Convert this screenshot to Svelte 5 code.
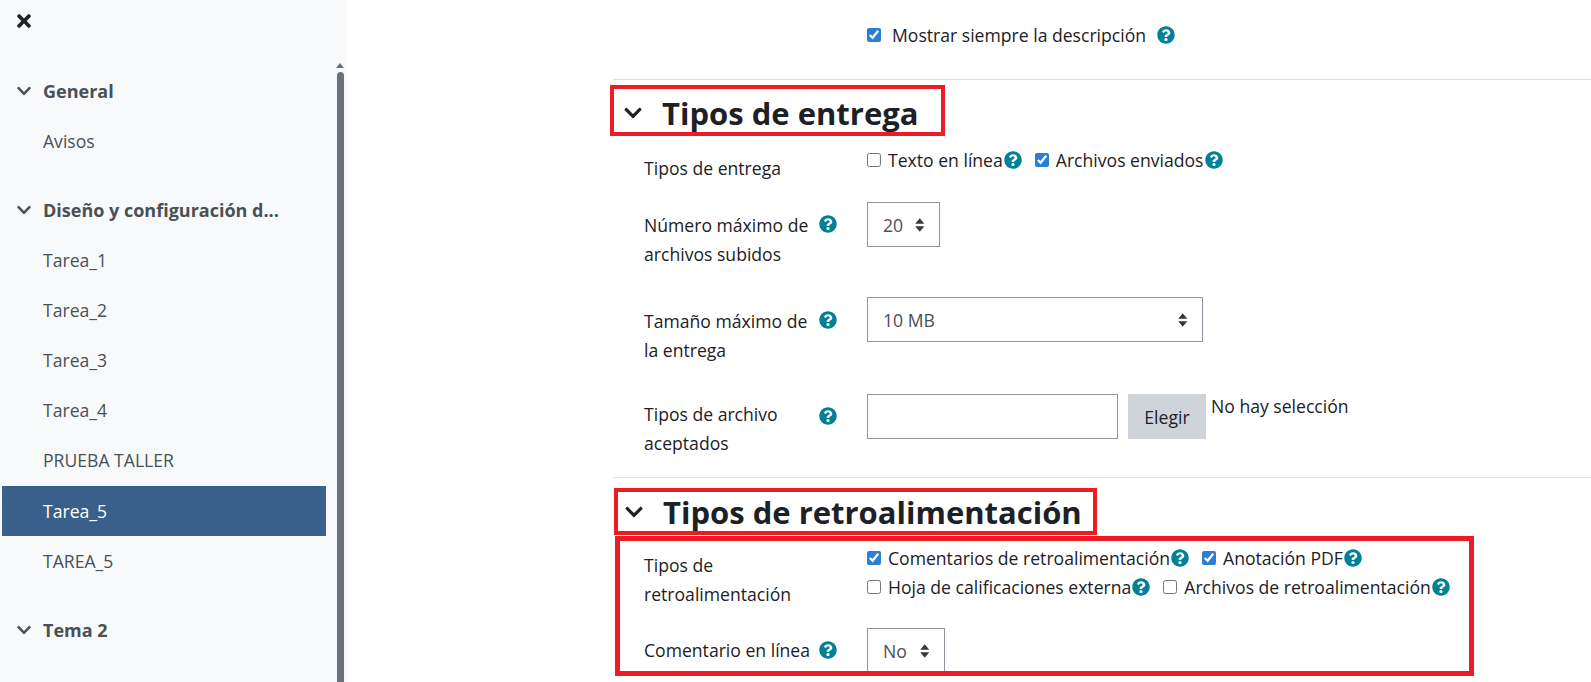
<script>
	const closePath = 'M242.72 256l100.07-100.07c12.28-12.28 12.28-32.19 0-44.48l-22.24-22.24c-12.28-12.28-32.19-12.28-44.48 0L176 189.28 75.93 89.21c-12.28-12.28-32.19-12.28-44.48 0L9.21 111.45c-12.28 12.28-12.28 32.19 0 44.48L109.28 256 9.21 356.07c-12.28 12.28-12.28 32.19 0 44.48l22.24 22.24c12.28 12.28 32.2 12.28 44.48 0L176 322.72l100.07 100.07c12.28 12.28 32.2 12.28 44.48 0l22.24-22.24c12.28-12.28 12.28-32.19 0-44.48L242.72 256z';
	const chevronPath = 'M207.029 381.476L12.686 187.132c-9.373-9.373-9.373-24.569 0-33.941l22.667-22.667c9.357-9.357 24.522-9.375 33.901-.04L224 284.505l154.745-154.021c9.379-9.335 24.544-9.317 33.901.04l22.667 22.667c9.373 9.373 9.373 24.569 0 33.941L240.971 381.476c-9.373 9.372-24.569 9.372-33.942 0z';
	const helpPath = 'M504 256c0 136.997-111.043 248-248 248S8 392.997 8 256C8 119.083 119.043 8 256 8s248 111.083 248 248zM262.655 90c-54.497 0-89.255 22.957-116.549 63.758-3.536 5.286-2.353 12.415 2.715 16.258l34.699 26.31c5.205 3.947 12.621 3.008 16.665-2.122 17.864-22.658 30.113-35.797 57.303-35.797 20.429 0 45.698 13.148 45.698 32.958 0 14.976-12.363 22.667-32.534 33.976C247.128 238.528 216 254.941 216 296v4c0 6.627 5.373 12 12 12h56c6.627 0 12-5.373 12-12v-1.333c0-28.462 83.186-29.647 83.186-106.667 0-58.002-60.165-102-116.531-102zM256 338c-25.365 0-46 20.635-46 46 0 25.364 20.635 46 46 46s46-20.636 46-46c0-25.365-20.635-46-46-46z';

	const nav = [
		{ title: 'General', items: ['Avisos'] },
		{ title: 'Diseño y configuración d...', items: ['Tarea_1', 'Tarea_2', 'Tarea_3', 'Tarea_4', 'PRUEBA TALLER', 'Tarea_5', 'TAREA_5'] },
		{ title: 'Tema 2', items: [] }
	];
</script>

{#snippet help()}
	<svg class="help" viewBox="0 0 512 512" aria-hidden="true"><path d={helpPath} /></svg>
{/snippet}

{#snippet check(label, checked)}
	<label class="check">
		<input type="checkbox" {checked} />
		<span>{label}</span>{@render help()}
	</label>
{/snippet}

{#snippet dropdown(value, cls)}
	<div class="select {cls}">
		<span>{value}</span>
		<svg class="updown" viewBox="0 0 10 14" aria-hidden="true"><path d="M5 1l4 5H1zM5 13L1 8h8z" /></svg>
	</div>
{/snippet}

<div class="page">
	<aside class="sidebar">
		<button class="close" aria-label="Cerrar">
			<svg viewBox="0 0 352 512" aria-hidden="true"><path d={closePath} /></svg>
		</button>
		<nav>
			{#each nav as section}
				<div class="section">
					<div class="section-title">
						<svg class="chev" viewBox="0 0 448 512" aria-hidden="true"><path d={chevronPath} /></svg>
						<span>{section.title}</span>
					</div>
					{#each section.items as item}
						<div class="item" class:active={item === 'Tarea_5'}>{item}</div>
					{/each}
				</div>
			{/each}
		</nav>
		<div class="scroll-arrow"></div>
		<div class="scroll-thumb"></div>
	</aside>

	<main>
		<div class="always">
			<label class="check">
				<input type="checkbox" checked />
				<span class="gap">Mostrar siempre la descripción</span>{@render help()}
			</label>
		</div>
		<hr />

		<h2 class="mark first">
			<svg class="chev" viewBox="0 0 448 512" aria-hidden="true"><path d={chevronPath} /></svg>
			Tipos de entrega
		</h2>

		<div class="row r1">
			<div class="lab"><span>Tipos de entrega</span></div>
			<div class="checks">
				{@render check('Texto en línea', false)}
				{@render check('Archivos enviados', true)}
			</div>
		</div>
		<div class="row r2">
			<div class="lab"><span>Número máximo de archivos subidos</span>{@render help()}</div>
			{@render dropdown('20', 'small')}
		</div>
		<div class="row r3">
			<div class="lab"><span>Tamaño máximo de la entrega</span>{@render help()}</div>
			{@render dropdown('10 MB', 'wide')}
		</div>
		<div class="row r4">
			<div class="lab"><span>Tipos de archivo aceptados</span>{@render help()}</div>
			<div class="picker">
				<input class="text" type="text" aria-label="Tipos de archivo" />
				<button class="choose">Elegir</button>
				<span class="none">No hay selección</span>
			</div>
		</div>
		<hr class="second" />

		<h2 class="mark two">
			<svg class="chev" viewBox="0 0 448 512" aria-hidden="true"><path d={chevronPath} /></svg>
			Tipos de retroalimentación
		</h2>

		<div class="mark-box">
			<div class="row r5">
				<div class="lab"><span>Tipos de retroalimentación</span></div>
				<div class="two-lines">
					<div class="line">
						{@render check('Comentarios de retroalimentación', true)}
						{@render check('Anotación PDF', true)}
					</div>
					<div class="line">
						{@render check('Hoja de calificaciones externa', false)}
						{@render check('Archivos de retroalimentación', false)}
					</div>
				</div>
			</div>
			<div class="row r6">
				<div class="lab"><span>Comentario en línea</span>{@render help()}</div>
				{@render dropdown('No', 'tiny')}
			</div>
		</div>
	</main>
</div>

<style>
	:global(body) {
		margin: 0;
		background: #fff;
		overflow: hidden;
	}

	.page {
		display: flex;
		height: 682px;
		overflow: hidden;
		font-family: 'Open Sans', 'Noto Sans', sans-serif;
		font-size: 17.6px;
		color: #1d2125;
	}

	.sidebar {
		position: relative;
		flex: 0 0 347px;
		height: 682px;
		overflow: hidden;
		background: #f8f9fa;
		box-sizing: border-box;
		padding: 0 0 0 2px;
	}

	.close {
		display: block;
		margin: 11px 0 0 15px;
		padding: 0;
		width: 14px;
		height: 20px;
		background: none;
		border: none;
	}

	.close svg {
		display: block;
		width: 14px;
		height: 20px;
		fill: #1d2125;
	}

	nav {
		margin-top: 35px;
		width: 324px;
	}

	.section {
		margin-bottom: 19px;
	}

	.section-title {
		display: flex;
		align-items: center;
		height: 50px;
		font-weight: 700;
		font-size: 18px;
		color: #495057;
		padding-left: 15px;
	}

	.section-title .chev {
		width: 14px;
		height: 16px;
		margin-right: 12px;
		fill: #495057;
	}

	.item {
		height: 50.1px;
		line-height: 50.1px;
		padding-left: 41px;
		color: #495057;
	}

	.item.active {
		background: #3a5f8a;
		color: #fff;
	}

	.scroll-arrow {
		position: absolute;
		left: 336px;
		top: 63px;
		border-left: 4.5px solid transparent;
		border-right: 4.5px solid transparent;
		border-bottom: 5px solid #6a737b;
	}

	.scroll-thumb {
		position: absolute;
		left: 337px;
		top: 72px;
		width: 7px;
		bottom: 0;
		background: #6a737b;
		border-radius: 4px 4px 0 0;
	}

	main {
		flex: 1;
		min-width: 0;
		padding-left: 266px;
	}

	.always {
		height: 79px;
		box-sizing: border-box;
		padding: 23px 0 0 254px;
	}

	.always .gap {
		margin-left: 4px;
	}

	.always .help {
		margin-left: 11px;
	}

	hr {
		margin: 0;
		border: none;
		border-top: 1px solid #dee2e6;
	}

	.mark {
		display: flex;
		align-items: center;
		box-sizing: border-box;
		margin: 0;
		border: 4px solid #ed1c24;
		font-size: 31px;
		font-weight: 700;
		color: #1d2125;
		white-space: nowrap;
	}

	.mark .chev {
		width: 18px;
		height: 20px;
		margin-right: 20px;
		fill: #1d2125;
		flex: none;
	}

	.mark.first {
		width: 335px;
		height: 51px;
		margin: 5px 0 0 -3px;
		padding: 5px 0 0 10px;
	}

	.mark.two {
		width: 483px;
		height: 47px;
		margin: 10px 0 0 1px;
		padding: 0 0 0 7px;
	}

	.row {
		display: flex;
		padding-left: 31px;
	}

	.lab {
		flex: 0 0 223px;
		box-sizing: border-box;
		line-height: 28.5px;
		padding-right: 46px;
		position: relative;
	}

	.lab .help {
		position: absolute;
		left: 175px;
		top: 6px;
		margin: 0;
	}

	.help {
		width: 18px;
		height: 18px;
		fill: #008196;
		flex: none;
		margin-left: 1px;
	}

	.checks {
		display: flex;
		gap: 13px;
	}

	.check {
		display: inline-flex;
		align-items: center;
		white-space: nowrap;
		height: 24px;
	}

	.check input {
		width: 14px;
		height: 14px;
		margin: 0 7px 0 0;
		accent-color: #2a7fd5;
	}

	.select {
		position: relative;
		display: flex;
		align-items: center;
		box-sizing: border-box;
		height: 45px;
		border: 1px solid #8f959e;
		background: #fff;
		padding-left: 15px;
		color: #495057;
	}

	.updown {
		position: absolute;
		right: 14px;
		top: 14px;
		width: 11.5px;
		height: 16px;
		fill: #343a40;
	}

	.select.small {
		width: 73px;
	}

	.select.wide {
		width: 336px;
	}

	.select.tiny {
		width: 78px;
	}

	.r1 {
		margin-top: 12px;
		height: 54px;
	}

	.r1 .lab {
		padding-top: 6px;
	}

	.r2 {
		height: 95px;
	}

	.r2 .lab {
		padding-top: 9px;
	}

	.r2 .lab .help {
		top: 13px;
	}

	.r3 {
		height: 97px;
	}

	.r3 .lab {
		padding-top: 10px;
	}

	.r3 .lab .help {
		top: 14px;
	}

	.r4 {
		height: 83px;
	}

	.r4 .lab {
		padding-top: 6px;
	}

	.r4 .lab .help {
		top: 13px;
	}

	.picker {
		display: flex;
		align-items: flex-start;
	}

	.text {
		box-sizing: border-box;
		width: 251px;
		height: 45px;
		border: 1px solid #8f959e;
		margin: 0;
		padding: 0;
	}

	.choose {
		margin-left: 10px;
		width: 78px;
		height: 45px;
		border: none;
		background: #ced4da;
		font: inherit;
		color: #1d2125;
	}

	.none {
		margin: 1px 0 0 5px;
		line-height: 22px;
	}

	.mark-box {
		box-sizing: border-box;
		margin: 1px 0 0 2px;
		width: 859px;
		height: 140px;
		border: 5px solid #ed1c24;
		overflow: hidden;
	}

	.mark-box .row {
		padding-left: 24px;
	}

	.r5 {
		height: 79px;
		padding-top: 8px;
	}

	.r5 .lab {
		padding-top: 2px;
	}

	.two-lines {
		margin-top: -6px;
	}

	.line {
		display: flex;
		gap: 13px;
		height: 29.5px;
		align-items: center;
	}

	.r6 .lab {
		padding-top: 8px;
	}

	.r6 .lab .help {
		top: 13px;
	}
</style>
